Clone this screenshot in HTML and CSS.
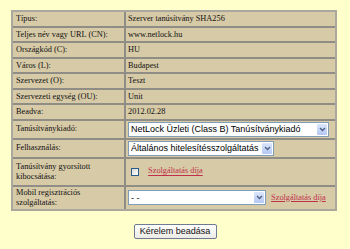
FILE: index.html
```html
<!DOCTYPE html>
<html lang="hu">
<head>
    <meta charset="UTF-8">
    <title>Tanúsítványkérelem</title>
    <link rel="stylesheet" href="styles.css">
</head>
<body>
    <form class="request">
        <table class="details">
            <tr>
                <td class="label">Típus:</td>
                <td class="value">Szerver tanúsítvány SHA256</td>
            </tr>
            <tr>
                <td class="label">Teljes név vagy URL (CN):</td>
                <td class="value">www.netlock.hu</td>
            </tr>
            <tr>
                <td class="label">Országkód (C):</td>
                <td class="value">HU</td>
            </tr>
            <tr>
                <td class="label">Város (L):</td>
                <td class="value">Budapest</td>
            </tr>
            <tr>
                <td class="label">Szervezet (O):</td>
                <td class="value">Teszt</td>
            </tr>
            <tr>
                <td class="label">Szervezeti egység (OU):</td>
                <td class="value">Unit</td>
            </tr>
            <tr>
                <td class="label">Beadva:</td>
                <td class="value">2012.02.28</td>
            </tr>
            <tr>
                <td class="label">Tanúsítványkiadó:</td>
                <td class="value field">
                    <span class="select-box issuer">
                        <select name="issuer">
                            <option>NetLock Üzleti (Class B) Tanúsítványkiadó</option>
                        </select>
                        <span class="arrow"><svg width="7" height="5" viewBox="0 0 7 5"><polyline points="1,1 3.5,3.5 6,1" fill="none" stroke="#4d6185" stroke-width="1.4"/></svg></span>
                    </span>
                </td>
            </tr>
            <tr>
                <td class="label">Felhasználás:</td>
                <td class="value field">
                    <span class="select-box usage">
                        <select name="usage">
                            <option>Általános hitelesítésszolgáltatás</option>
                        </select>
                        <span class="arrow"><svg width="7" height="5" viewBox="0 0 7 5"><polyline points="1,1 3.5,3.5 6,1" fill="none" stroke="#4d6185" stroke-width="1.4"/></svg></span>
                    </span>
                </td>
            </tr>
            <tr class="tall">
                <td class="label">Tanúsítvány gyorsított kibocsátása:</td>
                <td class="value field">
                    <input type="checkbox" class="check" name="fast">
                    <a href="#" class="fee">Szolgáltatás díja</a>
                </td>
            </tr>
            <tr class="last">
                <td class="label">Mobil regisztrációs szolgáltatás:</td>
                <td class="value field">
                    <span class="select-box mobile">
                        <select name="mobile">
                            <option>- -</option>
                        </select>
                        <span class="arrow"><svg width="7" height="5" viewBox="0 0 7 5"><polyline points="1,1 3.5,3.5 6,1" fill="none" stroke="#4d6185" stroke-width="1.4"/></svg></span>
                    </span>
                    <a href="#" class="fee">Szolgáltatás díja</a>
                </td>
            </tr>
        </table>

        <div class="actions">
            <button type="submit">Kérelem beadása</button>
        </div>
    </form>
</body>
</html>
```

FILE: styles.css
```css
* {
    box-sizing: border-box;
}

body {
    margin: 0;
    background: #ffffcc;
    font-family: "Liberation Serif", "Times New Roman", serif;
    font-size: 8.3px;
    color: #111;
}

.details {
    width: 326px;
    margin: 10px 0 0 11px;
    border-collapse: separate;
    border-spacing: 0;
    border: 2px solid #a9a79e;
    background: #d7caa7;
}

.details td {
    padding: 2px 3px 1.5px;
    line-height: 10px;
    border-bottom: 2px solid #8f8d85;
    vertical-align: middle;
}

.details tr.last td {
    border-bottom: 0;
    padding-top: 1px;
    padding-bottom: 1px;
}

.label {
    width: 113px;
    border-right: 2px solid #8f8d85;
}

.value {
    padding-left: 2px !important;
}

.field {
    padding-top: 1px !important;
    padding-bottom: 1px !important;
    white-space: nowrap;
}

.tall td {
    padding-top: 3px !important;
    padding-bottom: 3px !important;
}

.select-box {
    position: relative;
    display: inline-block;
    vertical-align: middle;
}

.select-box select {
    appearance: none;
    -webkit-appearance: none;
    width: 100%;
    height: 15px;
    margin: 0;
    padding: 0 13px 0 2px;
    border: 1px solid #7f9db9;
    border-radius: 0;
    background: #fff;
    font-family: "Liberation Sans", Arial, sans-serif;
    font-size: 9px;
    color: #000;
}

.issuer {
    width: 201px;
}

.usage {
    width: 146px;
}

.mobile {
    width: 138px;
}

.arrow {
    position: absolute;
    top: 2px;
    right: 2px;
    bottom: 2px;
    width: 10px;
    display: flex;
    align-items: center;
    justify-content: center;
    background: linear-gradient(#dbe6fc, #b5c8f4);
    border-radius: 1px;
    pointer-events: none;
}

.check {
    appearance: none;
    -webkit-appearance: none;
    width: 8px;
    height: 8px;
    margin: 0 7px 0 3px;
    border: 1px solid #2a5a8a;
    background: linear-gradient(135deg, #d8d8d2, #fff);
    vertical-align: middle;
}

.fee {
    margin-left: 3px;
    color: #c0304a;
    text-decoration: underline;
    vertical-align: middle;
}

.check + .fee {
    margin-left: 0;
}

.actions {
    margin-top: 13px;
    text-align: center;
}

.actions button {
    width: 83px;
    height: 15px;
    padding: 0;
    border: 1px solid #6f7b90;
    border-radius: 2px;
    background: linear-gradient(#ffffff, #ebeae4);
    font-family: "Liberation Sans", Arial, sans-serif;
    font-size: 9px;
    color: #111;
}
```
